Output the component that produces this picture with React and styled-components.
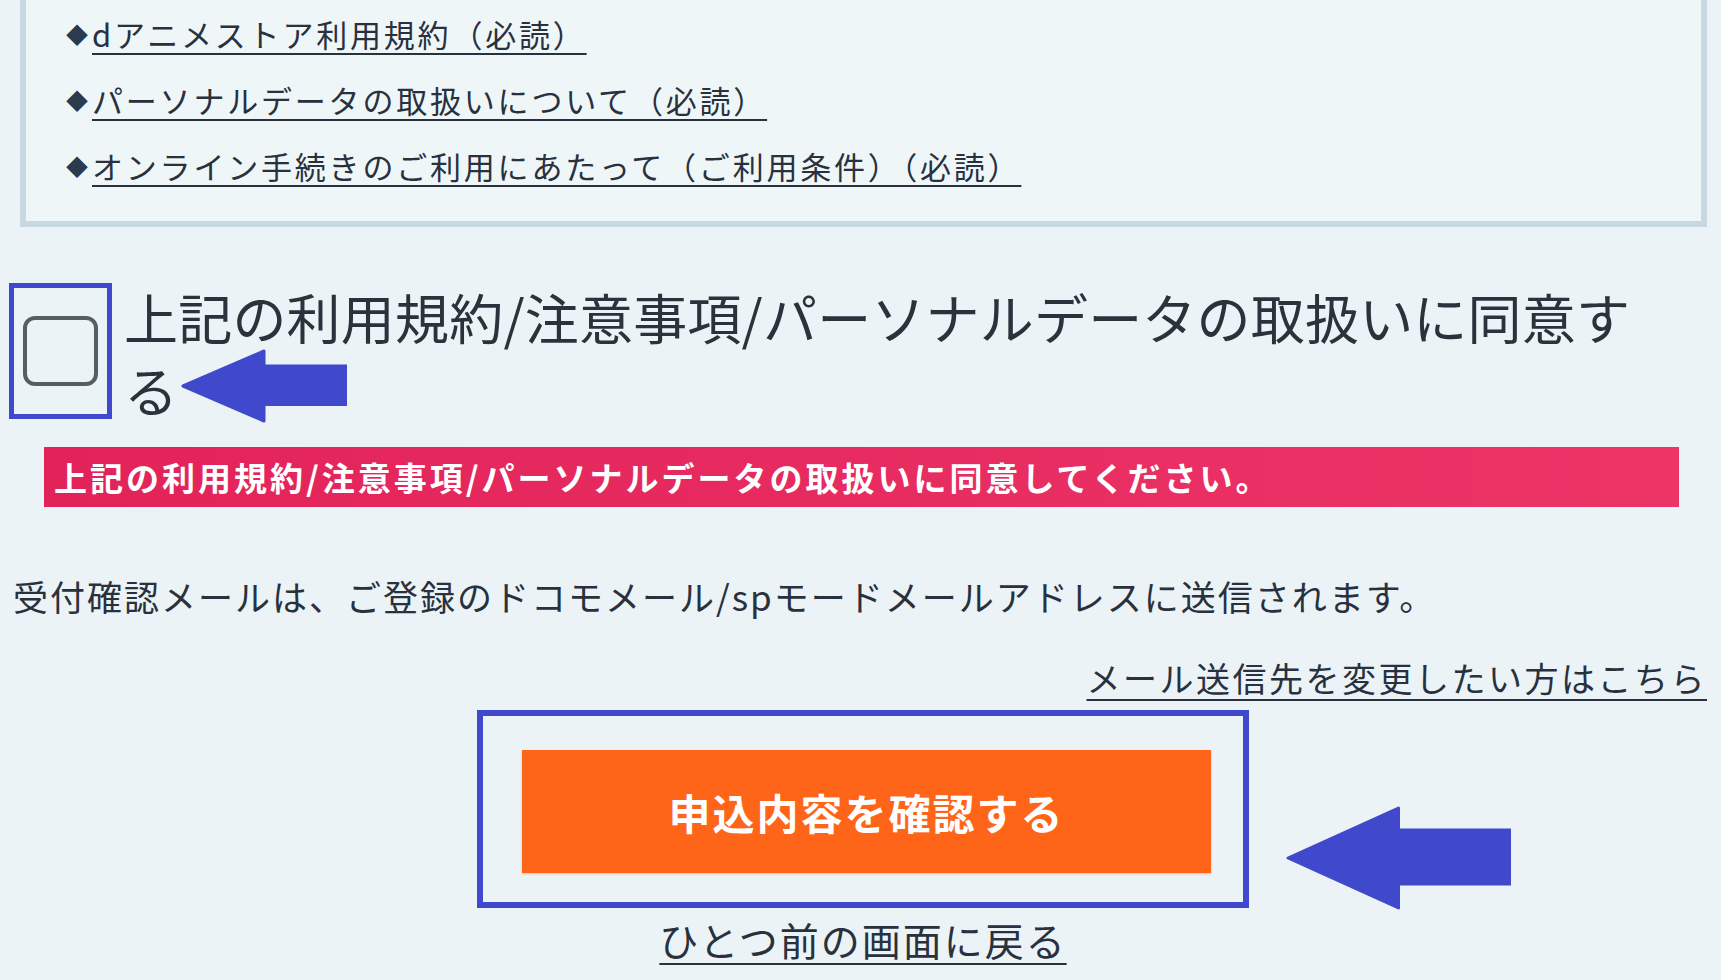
import React from 'react'
import styled, { createGlobalStyle } from 'styled-components'

const GlobalStyle = createGlobalStyle`
  body {
    margin: 0;
    background: #ebf3f6;
    color: #28313d;
    font-family: "Noto Sans CJK JP", "Noto Sans", sans-serif;
  }
`

const Page = styled.div`
  width: 1721px;
  height: 980px;
  box-sizing: border-box;
  padding: 0 14px 0 9px;
  display: flex;
  flex-direction: column;
  overflow: hidden;
`

const TermsBox = styled.ul`
  list-style: none;
  margin: 0 0 0 11px;
  padding: 0 0 23px 40px;
  border: 6px solid #c8d8e1;
  border-top: none;
  background: #eff6f8;
`

const TermsItem = styled.li`
  display: flex;
  align-items: center;
  height: 66px;
  font-size: 31px;
  letter-spacing: 2.8px;
  &::before {
    content: '◆';
    font-size: 22px;
    color: #2b3a4c;
    margin-right: 4px;
    letter-spacing: 0;
  }
  a {
    color: #28313d;
    text-decoration: underline;
    text-underline-offset: 6px;
    text-decoration-thickness: 2px;
  }
`

const AgreeRow = styled.div`
  position: relative;
  display: flex;
  align-items: flex-start;
  margin-top: 56px;
`

const CheckFrame = styled.div`
  flex: none;
  width: 103px;
  height: 136px;
  box-sizing: border-box;
  border: 5px solid #4048cc;
  display: flex;
  align-items: center;
  justify-content: center;
`

const CheckBox = styled.span`
  width: 75px;
  height: 70px;
  box-sizing: border-box;
  border: 4px solid #565d64;
  border-radius: 12px;
`

const AgreeLabel = styled.label`
  margin: -3px 0 0 12px;
  font-size: 54px;
  line-height: 73px;
  letter-spacing: 0.2px;
  width: 1530px;
  color: #2a323c;
`

const Arrow = styled.svg`
  position: absolute;
  left: ${p => p.$left}px;
  top: ${p => p.$top}px;
`

const ErrorBar = styled.div`
  margin: 21px 28px 0 35px;
  height: 60px;
  background: linear-gradient(90deg, #e2235a, #ec3467);
  color: #fff;
  font-weight: 700;
  font-size: 33px;
  letter-spacing: 3px;
  display: flex;
  align-items: center;
  padding-left: 10px;
`

const Notice = styled.p`
  margin: 64px 0 0 4px;
  font-size: 35px;
  line-height: 50px;
  letter-spacing: 2px;
`

const TextLink = styled.a`
  color: #28313d;
  text-decoration: underline;
  text-underline-offset: 7px;
  text-decoration-thickness: 2px;
  font-size: ${p => p.$size}px;
  line-height: 50px;
  letter-spacing: ${p => p.$spacing}px;
`

const RightLinkRow = styled.div`
  margin-top: 32px;
  display: flex;
  justify-content: flex-end;
`

const Actions = styled.div`
  margin-top: 7px;
  display: flex;
  flex-direction: column;
  align-items: center;
  padding-left: 10px;
`

const ButtonFrame = styled.div`
  position: relative;
  width: 772px;
  height: 198px;
  box-sizing: border-box;
  border: 6px solid #4048cc;
  padding: 34px 32px 29px 39px;
`

const ConfirmButton = styled.button`
  width: 689px;
  height: 123px;
  border: none;
  background: #ff6519;
  color: #fff;
  font-family: inherit;
  font-weight: 700;
  font-size: 42px;
  letter-spacing: 2px;
  box-shadow: 0 1px 2px rgba(120, 50, 10, 0.25);
`

const BackRow = styled.div`
  margin-top: 6px;
`

function LeftArrow({ left, top, width, height }) {
  const h = height
  const head = width * 0.5
  return (
    <Arrow $left={left} $top={top} width={width} height={height} viewBox={`0 0 ${width} ${height}`}>
      <polygon
        points={`2,${h / 2} ${head},2 ${head},${h * 0.23} ${width},${h * 0.23} ${width},${h * 0.75} ${head},${h * 0.75} ${head},${h - 2}`}
        fill="#4048cc"
        stroke="#4048cc"
        strokeWidth="3"
        strokeLinejoin="round"
      />
    </Arrow>
  )
}

export default function App() {
  return (
    <>
      <GlobalStyle />
      <Page>
        <TermsBox>
          <TermsItem><a href="#">dアニメストア利用規約（必読）</a></TermsItem>
          <TermsItem><a href="#">パーソナルデータの取扱いについて（必読）</a></TermsItem>
          <TermsItem><a href="#">オンライン手続きのご利用にあたって（ご利用条件）（必読）</a></TermsItem>
        </TermsBox>

        <AgreeRow>
          <CheckFrame>
            <CheckBox />
          </CheckFrame>
          <AgreeLabel>上記の利用規約/注意事項/パーソナルデータの取扱いに同意する</AgreeLabel>
          <LeftArrow left={172} top={66} width={166} height={74} />
        </AgreeRow>

        <ErrorBar>上記の利用規約/注意事項/パーソナルデータの取扱いに同意してください。</ErrorBar>

        <Notice>受付確認メールは、ご登録のドコモメール/spモードメールアドレスに送信されます。</Notice>

        <RightLinkRow>
          <TextLink href="#" $size={34} $spacing={2.5}>メール送信先を変更したい方はこちら</TextLink>
        </RightLinkRow>

        <Actions>
          <ButtonFrame>
            <ConfirmButton type="button">申込内容を確認する</ConfirmButton>
            <LeftArrow left={803} top={90} width={225} height={104} />
          </ButtonFrame>
          <BackRow>
            <TextLink href="#" $size={39} $spacing={2}>ひとつ前の画面に戻る</TextLink>
          </BackRow>
        </Actions>
      </Page>
    </>
  )
}
